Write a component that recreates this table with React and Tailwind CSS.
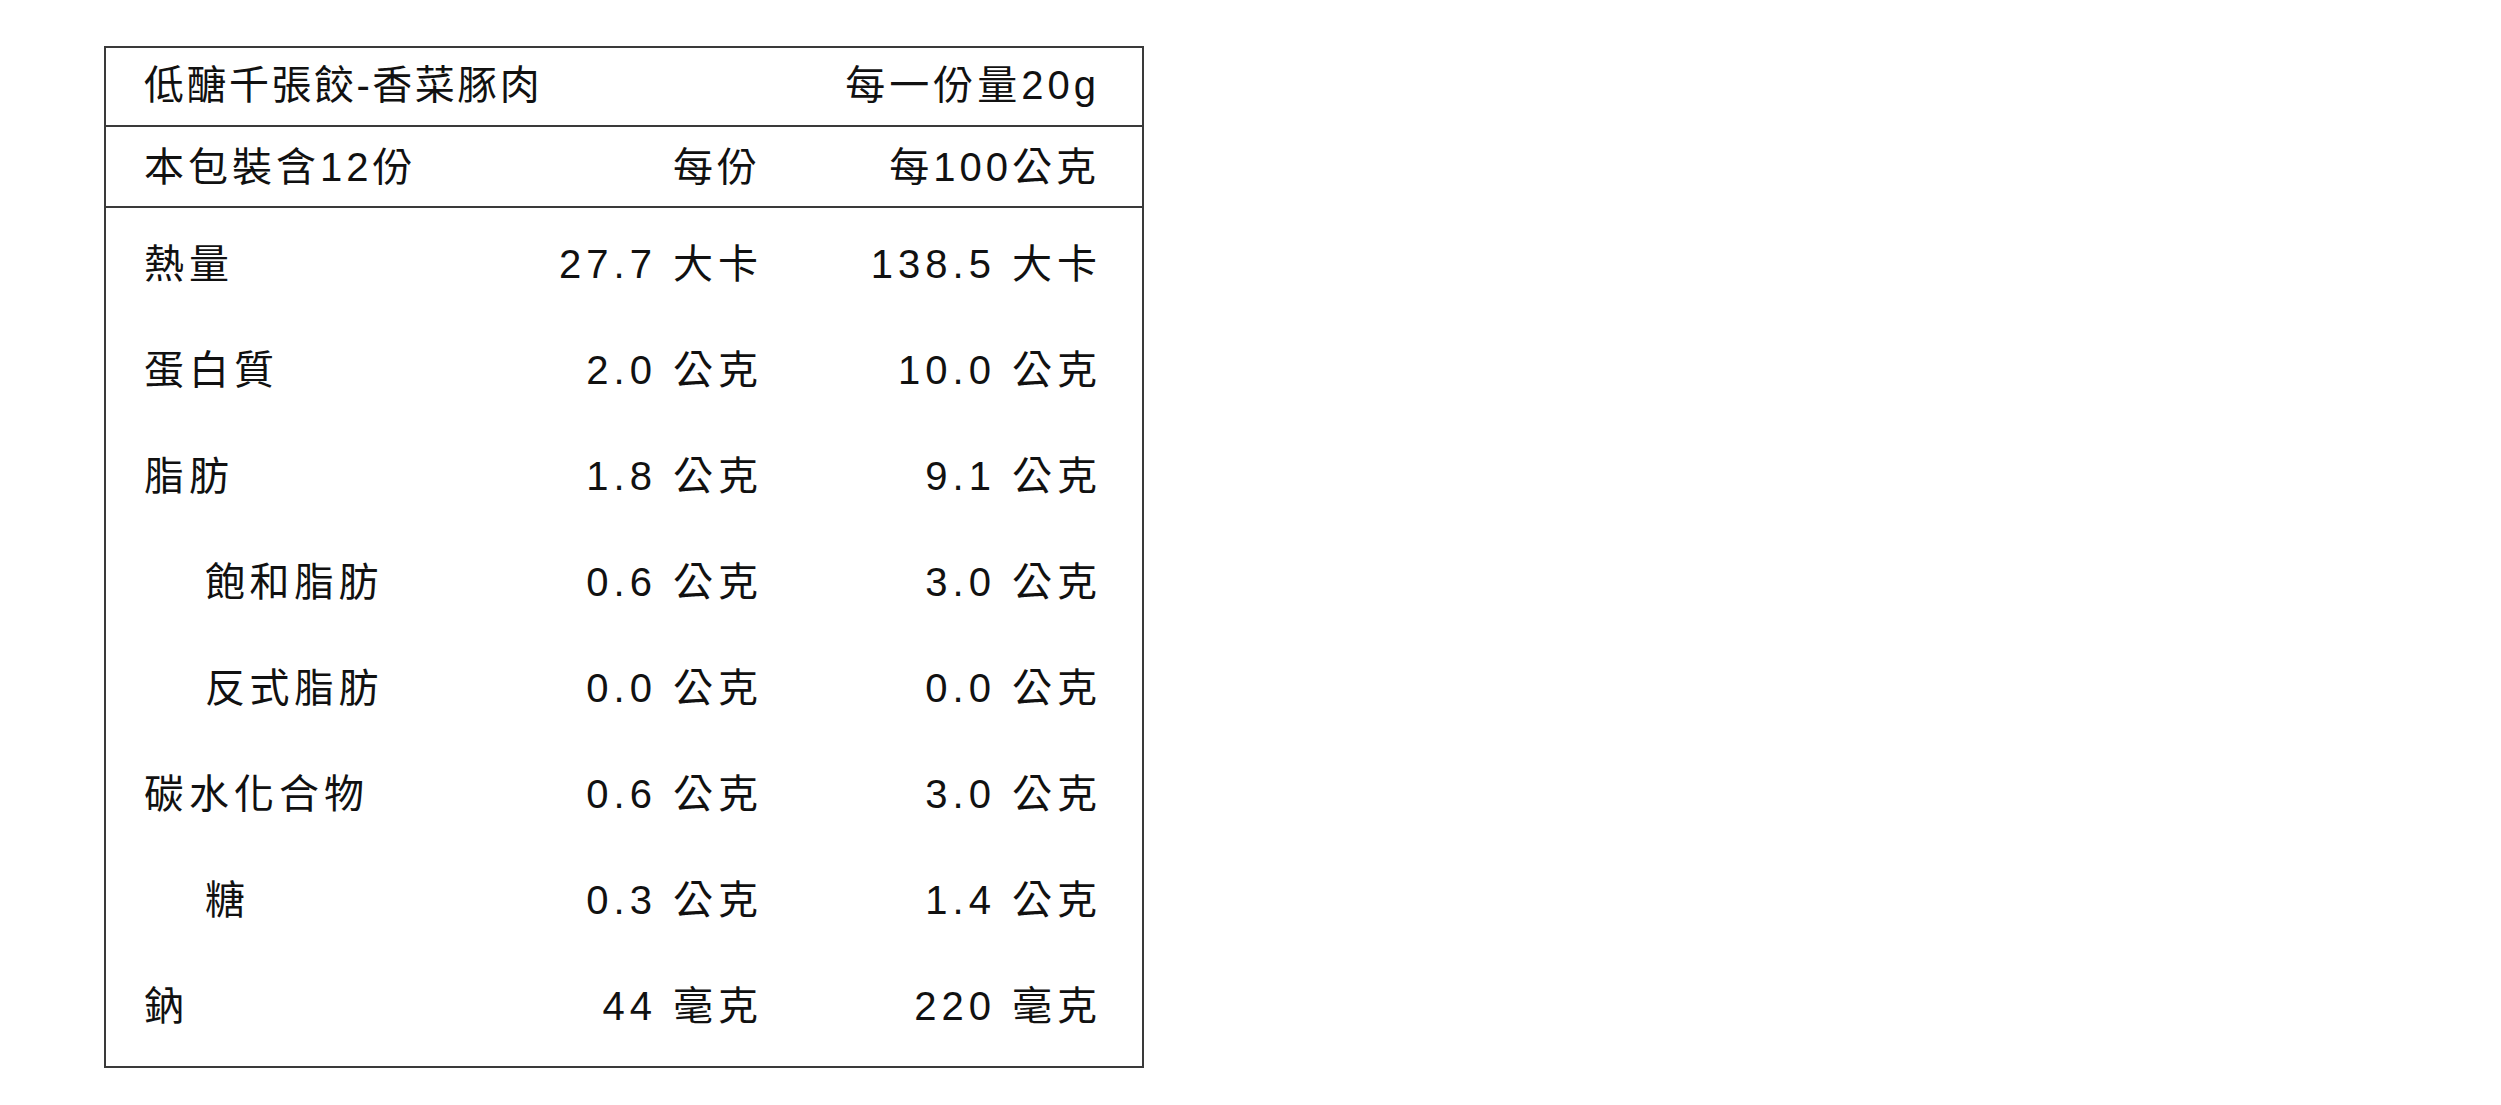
import React from "react";

const rows = [
  { label: "熱量", a: "27.7 大卡", b: "138.5 大卡" },
  { label: "蛋白質", a: "2.0 公克", b: "10.0 公克" },
  { label: "脂肪", a: "1.8 公克", b: "9.1 公克" },
  { label: "飽和脂肪", a: "0.6 公克", b: "3.0 公克", indent: true },
  { label: "反式脂肪", a: "0.0 公克", b: "0.0 公克", indent: true },
  { label: "碳水化合物", a: "0.6 公克", b: "3.0 公克" },
  { label: "糖", a: "0.3 公克", b: "1.4 公克", indent: true },
  { label: "鈉", a: "44 毫克", b: "220 毫克" },
];

export default function App() {
  return (
    <div
      className="w-[2501px] h-[1105px] bg-white text-[#111] pt-[46px] pl-[104px]"
      style={{ fontFamily: '"Liberation Sans", "Noto Sans CJK TC", sans-serif' }}
    >
      <div className="w-[1040px] border-2 border-[#3a3a3a]">
        <div className="h-[79px] border-b-2 border-[#3a3a3a] flex items-center justify-between pl-[38px] pr-[42px] pb-[4px] text-[40px] leading-none">
          <span className="tracking-[2.5px]">低醣千張餃-香菜豚肉</span>
          <span className="tracking-[4px]">每一份量20g</span>
        </div>
        <div className="h-[81px] border-b-2 border-[#3a3a3a] grid grid-cols-[1fr_284px_339px] items-center pl-[38px] pr-[42px] text-[40px] leading-none tracking-[4px]">
          <span>本包裝含12份</span>
          <span className="text-right">每份</span>
          <span className="text-right">每100公克</span>
        </div>
        <div className="pt-[3px] pb-[7px]">
          {rows.map((r) => (
            <div
              key={r.label}
              className="h-[106px] grid grid-cols-[1fr_286px_339px] items-center pl-[38px] pr-[40px] text-[40px] leading-none tracking-[5px]"
            >
              <span className={r.indent ? "pl-[61px] tracking-[4.5px]" : ""}>{r.label}</span>
              <span className="text-right whitespace-pre">{r.a}</span>
              <span className="text-right whitespace-pre">{r.b}</span>
            </div>
          ))}
        </div>
      </div>
    </div>
  );
}
